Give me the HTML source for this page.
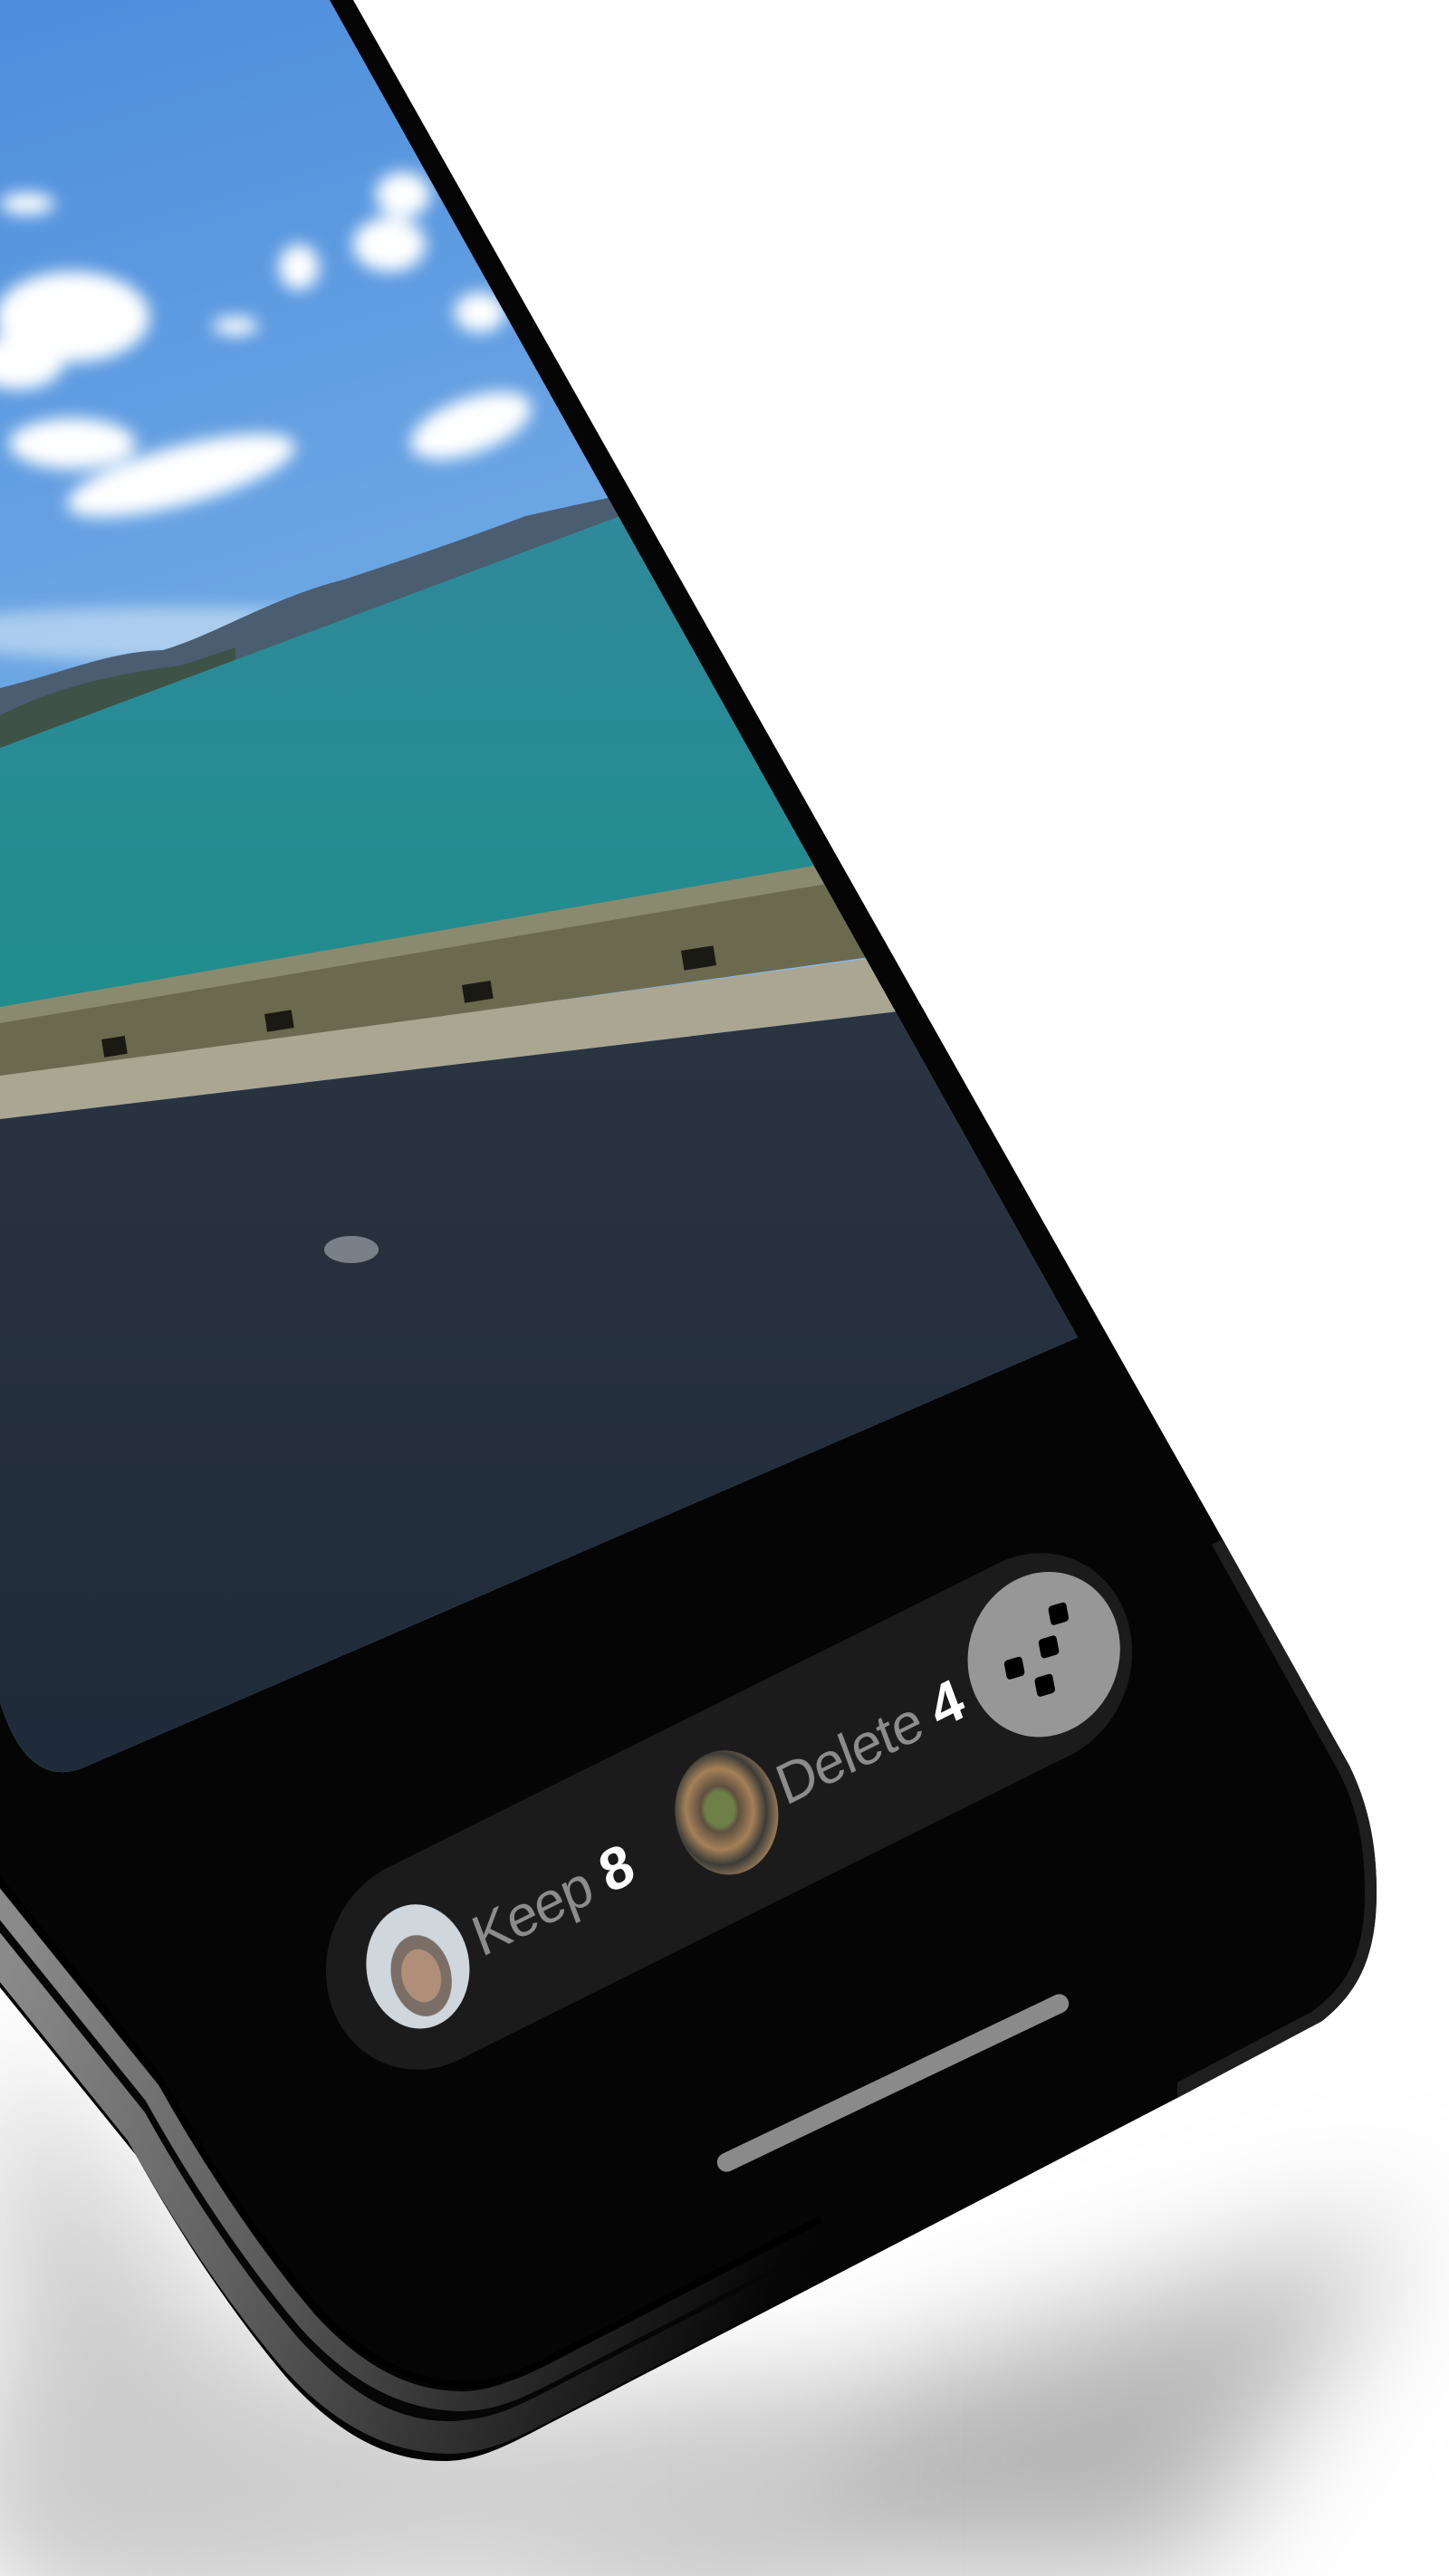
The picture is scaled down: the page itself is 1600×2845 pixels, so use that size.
<!DOCTYPE html>
<html><head><meta charset="utf-8">
<style>
html,body{margin:0;padding:0;}
body{width:1600px;height:2845px;position:relative;overflow:hidden;background:#fff;font-family:"Liberation Sans",sans-serif;}
svg.bg{position:absolute;left:0;top:0;}
.pill{position:absolute;left:316px;top:1888px;width:978px;height:225px;border-radius:113px;background:#1b1b1b;transform:rotate(-26.5deg) skewX(-6deg);transform-origin:50% 50%;}
.av{position:absolute;top:45px;width:116px;height:135px;border-radius:50%;overflow:hidden;}
.av1{left:47px;background:radial-gradient(ellipse at 50% 58%,#b08e78 0 26%,#7a6e66 27% 40%,#cfd6dc 41% 72%,#a7b0b8 73%);}
.av2{left:428px;background:radial-gradient(ellipse at 45% 45%,#6f7f48 0 18%,#5e5040 24%,#a58058 42%,#3c3c38 58%,#b58e62 78%);}
.t{position:absolute;top:76px;font-size:62px;line-height:74px;color:#8c8c8c;letter-spacing:-1px;white-space:nowrap;}
.n{color:#fff;font-size:64px;font-weight:bold;}
.btn{position:absolute;left:790px;top:25px;width:175px;height:175px;border-radius:50%;background:#979797;}
.sq{position:absolute;width:21px;height:21px;background:#000;border-radius:4px;transform:rotate(10deg);}
.home{position:absolute;left:772px;top:2290px;width:428px;height:21px;border-radius:11px;background:#8a8a8a;transform:rotate(-25.5deg);}
</style></head><body>
<svg class="bg" width="1600" height="2845" viewBox="0 0 1600 2845">
<defs>
<filter id="blur" x="-50%" y="-50%" width="200%" height="200%"><feGaussianBlur stdDeviation="70"/></filter>
<filter id="cb" x="-50%" y="-50%" width="200%" height="200%"><feGaussianBlur stdDeviation="9"/></filter>
<linearGradient id="sky" x1="0" y1="0" x2="0.2" y2="1"><stop offset="0" stop-color="#4d8ddc"/><stop offset="0.6" stop-color="#7fb6ea"/><stop offset="1" stop-color="#b9d9f1"/></linearGradient>
<linearGradient id="sea" x1="0" y1="0" x2="0" y2="1"><stop offset="0" stop-color="#2f8a9a"/><stop offset="1" stop-color="#1f8d8d"/></linearGradient>
<linearGradient id="asph" x1="0" y1="0" x2="0" y2="1"><stop offset="0" stop-color="#2b3441"/><stop offset="1" stop-color="#1e2a39"/></linearGradient>
<linearGradient id="band" gradientUnits="userSpaceOnUse" x1="0" y1="2200" x2="850" y2="2550"><stop offset="0" stop-color="#8a8a8a"/><stop offset="0.4" stop-color="#5e5e5e"/><stop offset="0.75" stop-color="#2a2a2a"/><stop offset="1" stop-color="#060606"/></linearGradient>
<clipPath id="scr"><path d="M0 0 L364 0 L1190 1477 L90 1953 Q30 1975 0 1880 Z"/></clipPath>
<path id="sil" d="M390 0 L1350 1700 L1490 1950 C1512 1995 1520 2040 1520 2090 C1520 2160 1500 2200 1460 2232 L1300 2317 L600 2680 C555 2704 525 2718 490 2718 C430 2718 375 2690 320 2630 C260 2560 200 2470 150 2380 L0 2195 L0 0 Z"/>
<clipPath id="silc"><use href="#sil"/></clipPath>
<path id="edge" d="M-120 2045 L150 2380 C200 2470 260 2560 320 2630 C375 2690 430 2718 490 2718 C525 2718 555 2704 600 2680 L880 2535" fill="none"/>
</defs>
<path d="M0 2300 L450 2845 L1300 2845 L1560 2450 L1000 2620 L500 2830 Z" fill="#b5b5b5" filter="url(#blur)"/>
<path d="M0 2250 L420 2845 L0 2845 Z" fill="#cbcbcb" filter="url(#blur)"/>
<rect x="0" y="2650" width="900" height="195" fill="#cccccc" filter="url(#blur)"/>
<use href="#sil" fill="#050505"/>
<g clip-path="url(#silc)">
<use href="#edge" stroke="url(#band)" stroke-width="36" transform="translate(6,-26)"/>
<use href="#edge" stroke="#060606" stroke-width="10" transform="translate(14,-50)"/>
<use href="#edge" stroke="url(#band)" stroke-width="22" transform="translate(20,-66)"/>
<use href="#edge" stroke="#000" stroke-width="8" transform="translate(26,-84)"/>
</g>
<path d="M1350 1700 L1490 1950 C1512 1995 1520 2040 1520 2090 C1520 2160 1500 2200 1460 2232 L1300 2317 L1300 2300 L1448 2222 C1490 2192 1507 2155 1507 2090 C1507 2040 1500 2000 1478 1956 L1338 1706 Z" fill="#1e1e1e"/>
<g clip-path="url(#scr)">
<rect x="0" y="0" width="1300" height="2000" fill="url(#sky)"/>
<g fill="#fff" filter="url(#cb)">
<ellipse cx="80" cy="350" rx="85" ry="50"/><ellipse cx="20" cy="400" rx="50" ry="30"/>
<ellipse cx="430" cy="270" rx="40" ry="30"/><ellipse cx="445" cy="215" rx="30" ry="25"/>
<ellipse cx="330" cy="295" rx="22" ry="25"/><ellipse cx="530" cy="345" rx="28" ry="22"/>
<ellipse cx="30" cy="225" rx="30" ry="12"/>
<ellipse cx="200" cy="525" rx="130" ry="32" transform="rotate(-15 200 525)"/>
<ellipse cx="80" cy="490" rx="70" ry="28"/>
<ellipse cx="520" cy="470" rx="70" ry="30" transform="rotate(-20 520 470)"/>
<ellipse cx="260" cy="360" rx="25" ry="10"/>
</g>
<ellipse cx="200" cy="700" rx="300" ry="30" fill="#d8e8f4" opacity="0.6" filter="url(#cb)"/>
<path d="M0 760 C80 740 120 720 180 718 C240 700 300 660 380 640 C440 620 500 600 580 570 L680 548 L690 575 L0 835 Z" fill="#4b5d70"/>
<path d="M0 790 C60 760 120 745 200 735 L260 715 L260 760 L0 840 Z" fill="#3f5248"/>
<path d="M0 826 L690 568 L1300 568 L1300 900 L0 1125 Z" fill="url(#sea)"/>
<path d="M0 1112 L905 955 L1300 890 L1300 940 L0 1160 Z" fill="#8a8a6e"/>
<path d="M0 1130 L920 975 L1300 910 L1300 1010 L0 1190 Z" fill="#6c6a4e"/>
<g fill="#1a1a14"><rect x="112" y="1148" width="26" height="20" transform="rotate(-9 112 1148)"/><rect x="292" y="1120" width="30" height="20" transform="rotate(-9 292 1120)"/><rect x="510" y="1088" width="32" height="20" transform="rotate(-9 510 1088)"/><rect x="752" y="1050" width="36" height="22" transform="rotate(-9 752 1050)"/></g>
<path d="M0 1188 L950 1060 L1300 1010 L1300 1080 L0 1236 Z" fill="#aaa691"/>
<path d="M0 1236 L1300 1080 L1300 2000 L0 2000 Z" fill="url(#asph)"/>
<ellipse cx="388" cy="1380" rx="30" ry="15" fill="#7a8088"/>
</g>
</svg>
<div class="pill">
  <div class="av av1"></div>
  <div class="t" style="left:175px">Keep <span class="n">8</span></div>
  <div class="av av2"></div>
  <div class="t" style="left:550px">Delete <span class="n">4</span></div>
  <div class="btn">
    <div class="sq" style="left:108px;top:44px"></div>
    <div class="sq" style="left:85px;top:72px"></div>
    <div class="sq" style="left:41px;top:76px"></div>
    <div class="sq" style="left:66px;top:108px"></div>
  </div>
</div>
<div class="home"></div>
</body></html>
